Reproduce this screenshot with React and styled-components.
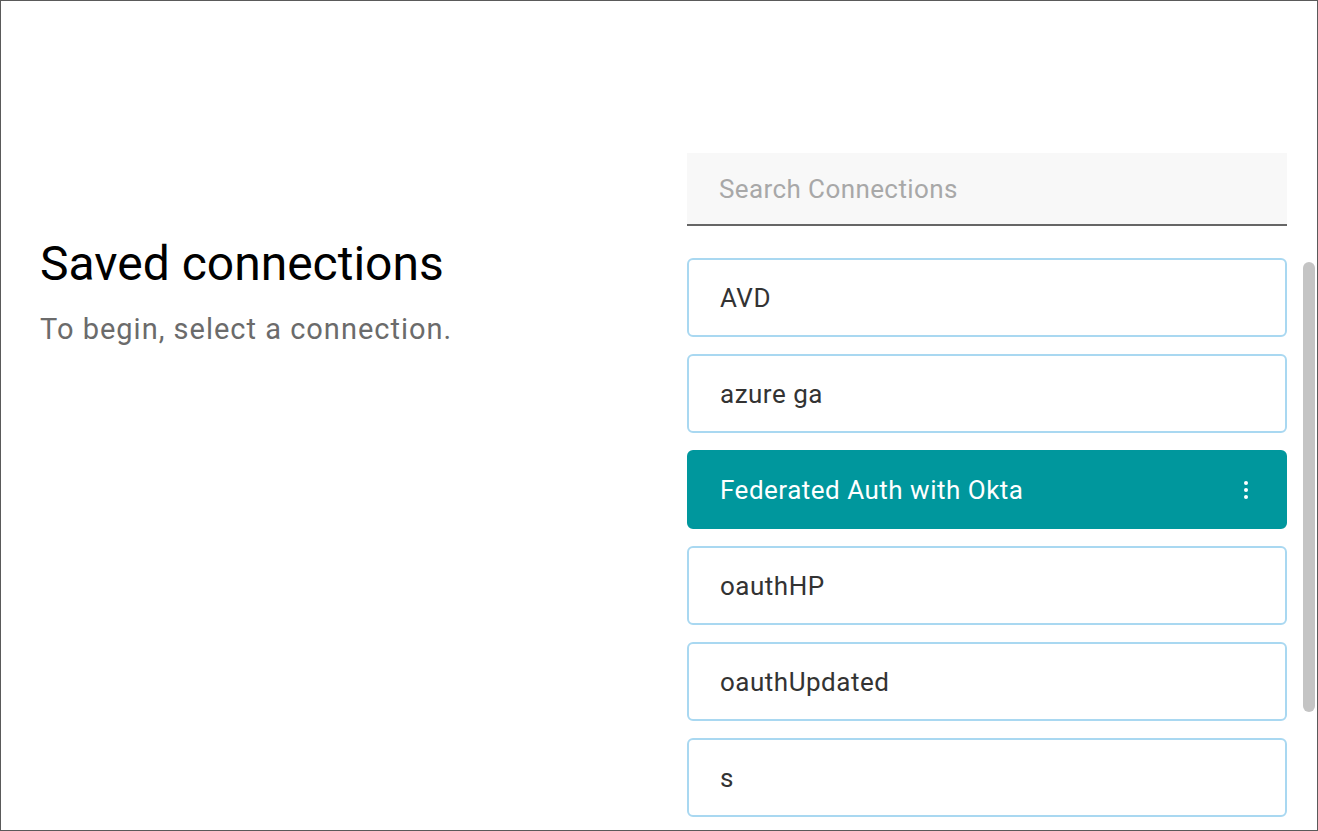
import React from "react";
import styled, { createGlobalStyle } from "styled-components";

const Global = createGlobalStyle`
  html, body { margin: 0; padding: 0; background: #fff; }
  body { font-family: Roboto, "Noto Sans", sans-serif; }
  * { box-sizing: border-box; }
`;

const Frame = styled.div`
  width: 1318px;
  height: 831px;
  border: 1px solid #5a5a5a;
  display: grid;
  grid-template-columns: 686px 1fr;
  overflow: hidden;
`;

const Intro = styled.div`
  padding: 235px 0 0 39px;
`;

const Title = styled.h1`
  margin: 0;
  font-weight: 400;
  font-size: 48px;
  line-height: 56px;
  color: #000;
`;

const Sub = styled.p`
  margin: 20px 0 0;
  font-size: 29px;
  letter-spacing: 1px;
  color: #6b6b6b;
`;

const Side = styled.div`
  display: flex;
  flex-direction: column;
  padding-top: 152px;
  min-height: 0;
  position: relative;
`;

const Search = styled.input`
  width: 600px;
  height: 73px;
  border: none;
  border-bottom: 2px solid #666;
  background: #f8f8f8;
  padding: 0 32px;
  font-family: Roboto, sans-serif;
  font-size: 26px;
  letter-spacing: 0.4px;
  color: #333;
  outline: none;
  &::placeholder { color: #a8a8a8; }
`;

const List = styled.div`
  margin-top: 32px;
  flex: 1;
  min-height: 0;
  overflow: hidden;
  display: flex;
  flex-direction: column;
  gap: 17px;
`;

const Thumb = styled.div`
  position: absolute;
  left: 616px;
  top: 261px;
  width: 12px;
  height: 450px;
  border-radius: 6px;
  background: #c4c4c4;
`;

const Card = styled.div`
  flex: none;
  width: 600px;
  height: 79px;
  border: 2px solid ${p => (p.$active ? "#00979d" : "#a9d8f1")};
  background: ${p => (p.$active ? "#00979d" : "#fff")};
  color: ${p => (p.$active ? "#fff" : "#333")};
  border-radius: 6px;
  display: flex;
  align-items: center;
  justify-content: space-between;
  padding: 0 37px 0 31px;
  font-size: 26px;
  letter-spacing: 0.5px;
`;

const Dots = styled.span`
  display: flex;
  flex-direction: column;
  gap: 3px;
  & > i { width: 4px; height: 4px; border-radius: 50%; background: #fff; display: block; }
`;

const items = ["AVD", "azure ga", "Federated Auth with Okta", "oauthHP", "oauthUpdated", "s"];

export default function App() {
  return (
    <>
      <Global />
      <Frame>
        <Intro>
          <Title>Saved connections</Title>
          <Sub>To begin, select a connection.</Sub>
        </Intro>
        <Side>
          <Search placeholder="Search Connections" />
          <List>
            {items.map(n => (
              <Card key={n} $active={n === "Federated Auth with Okta"}>
                {n}
                {n === "Federated Auth with Okta" && (
                  <Dots><i /><i /><i /></Dots>
                )}
              </Card>
            ))}
          </List>
          <Thumb />
        </Side>
      </Frame>
    </>
  );
}
